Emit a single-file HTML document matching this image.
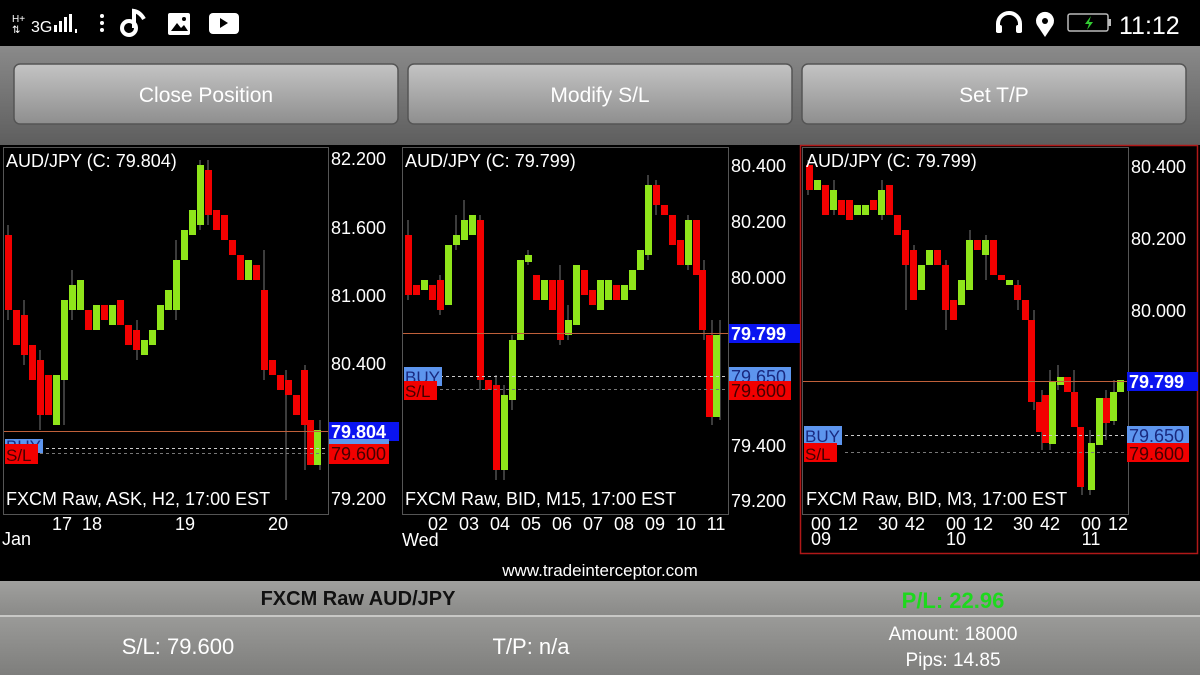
<!DOCTYPE html>
<html><head><meta charset="utf-8"><style>
html,body{margin:0;padding:0;background:#000;width:1200px;height:675px;overflow:hidden}
svg{display:block;font-family:"Liberation Sans",sans-serif}
.r{fill:#f20000}.g{fill:#8fe51a}
.lbl{fill:#fff;font-size:18px}
.ax{fill:#fff;font-size:18px}
</style></head><body>
<svg width="1200" height="675" viewBox="0 0 1200 675" xmlns="http://www.w3.org/2000/svg">
<defs>
<linearGradient id="top" x1="0" y1="0" x2="0" y2="1"><stop offset="0" stop-color="#8a8a8a"/><stop offset="1" stop-color="#5e5e5e"/></linearGradient>
<linearGradient id="btn" x1="0" y1="0" x2="0" y2="1"><stop offset="0" stop-color="#c4c4c4"/><stop offset="1" stop-color="#8e8e8e"/></linearGradient>
<linearGradient id="bar1" x1="0" y1="0" x2="0" y2="1"><stop offset="0" stop-color="#a0a09e"/><stop offset="1" stop-color="#8a8a88"/></linearGradient>
<linearGradient id="bar2" x1="0" y1="0" x2="0" y2="1"><stop offset="0" stop-color="#9a9a98"/><stop offset="1" stop-color="#7e7e7c"/></linearGradient>
</defs>
<rect width="1200" height="675" fill="#000"/>
<!-- status bar -->
<g fill="#fff">
<text x="12" y="22" font-size="10">H+</text>
<text x="12" y="33" font-size="10">⇅</text>
<text x="31" y="32" font-size="16">3G</text>
<rect x="54" y="25" width="3" height="7"/><rect x="59" y="21" width="3" height="11"/><rect x="64" y="17" width="3" height="15"/><rect x="69" y="14" width="3" height="18"/><rect x="75" y="29" width="2" height="4"/>
<circle cx="102" cy="16" r="2"/><circle cx="102" cy="23" r="2"/><circle cx="102" cy="30" r="2"/>
<circle cx="129" cy="28" r="7" fill="none" stroke="#fff" stroke-width="4"/><path d="M134 28V11q6 1 10 8" fill="none" stroke="#fff" stroke-width="4"/>
<rect x="168" y="13" width="22" height="22" rx="2"/><path d="M171 31l6-8 4 5 3-3 4 6z" fill="#000"/><circle cx="184" cy="19" r="2" fill="#000"/>
<rect x="209" y="13" width="30" height="21" rx="4"/><path d="M220 18l8 5-8 5z" fill="#000"/>
<path d="M998 32v-8a11 11 0 0 1 22 0v8" fill="none" stroke="#fff" stroke-width="4"/><rect x="996" y="25" width="6" height="8" rx="2"/><rect x="1016" y="25" width="6" height="8" rx="2"/>
<path d="M1045 37l-8-12a9 9 0 1 1 16 0z"/><circle cx="1045" cy="21" r="3" fill="#000"/>
<rect x="1068" y="14" width="40" height="17" rx="2" fill="none" stroke="#bbb" stroke-width="1.5"/><rect x="1108" y="19" width="3" height="7" fill="#bbb"/><path d="M1091 16l-6 8h4l-2 6 6-8h-4z" fill="#3c3"/>
<text x="1119" y="34" font-size="25">11:12</text>
</g>
<!-- top buttons area -->
<rect x="0" y="46" width="1200" height="99" fill="url(#top)"/>
<g>
<rect x="14" y="64" width="384" height="60" rx="6" fill="url(#btn)" stroke="#555" stroke-width="1.5"/>
<rect x="408" y="64" width="384" height="60" rx="6" fill="url(#btn)" stroke="#555" stroke-width="1.5"/>
<rect x="802" y="64" width="384" height="60" rx="6" fill="url(#btn)" stroke="#555" stroke-width="1.5"/>
<g fill="#fff" font-size="21" text-anchor="middle">
<text x="206" y="102">Close Position</text><text x="600" y="102">Modify S/L</text><text x="994" y="102">Set T/P</text>
</g></g>
<!-- chart frames -->
<rect x="3.5" y="147.5" width="325" height="367" fill="none" stroke="#555"/>
<rect x="402.5" y="147.5" width="326" height="367" fill="none" stroke="#555"/>
<rect x="802.5" y="147.5" width="326" height="367" fill="none" stroke="#555"/>
<rect x="800.5" y="145.5" width="397" height="408" fill="none" stroke="#b01818" stroke-width="1.5"/>
<!-- wicks -->
<g stroke="#777" stroke-width="1">
<path d="M8 225V320M24 300V365M40 350V430M64 370V425M72 270V320M137 320V360M176 240V320M200 160V230M208 160V225M264 250V380M286 370V500M305 365V470M320 420V470"/>
<path d="M408 220V300M440 275V315M456 215V250M464 200V240M480 215V390M496 375V480M504 385V480M512 335V410M528 250V265M560 265V345M568 305V340M648 175V260M656 180V215M688 215V270M704 260V340M712 320V425M720 320V420"/>
<path d="M808 160V195M834 180V215M882 180V220M906 240V310M914 245V300M946 260V330M970 230V260M986 235V280M1018 280V310M1034 310V410M1042 390V450M1050 370V450M1058 365V390M1074 370V400M1082 430V495M1090 430V495M1106 390V440M1114 380V425"/>
</g>
<!-- chart1 candles -->
<g>
<rect class="r" x="5" y="235" width="7" height="75"/><rect class="r" x="13" y="310" width="7" height="35"/><rect class="r" x="21" y="315" width="7" height="40"/><rect class="r" x="29" y="345" width="7" height="35"/><rect class="r" x="37" y="360" width="7" height="55"/><rect class="r" x="45" y="375" width="7" height="40"/><rect class="g" x="53" y="375" width="7" height="50"/><rect class="g" x="61" y="300" width="7" height="80"/><rect class="g" x="69" y="285" width="7" height="25"/><rect class="g" x="77" y="280" width="7" height="30"/><rect class="r" x="85" y="310" width="7" height="20"/><rect class="g" x="93" y="305" width="7" height="25"/><rect class="r" x="101" y="305" width="7" height="15"/><rect class="g" x="109" y="305" width="7" height="20"/><rect class="r" x="117" y="300" width="7" height="25"/><rect class="r" x="125" y="325" width="7" height="20"/><rect class="r" x="133" y="330" width="7" height="20"/><rect class="g" x="141" y="340" width="7" height="15"/><rect class="g" x="149" y="330" width="7" height="15"/><rect class="g" x="157" y="305" width="7" height="25"/><rect class="g" x="165" y="290" width="7" height="20"/><rect class="g" x="173" y="260" width="7" height="50"/><rect class="g" x="181" y="230" width="7" height="30"/><rect class="g" x="189" y="210" width="7" height="25"/><rect class="g" x="197" y="165" width="7" height="60"/><rect class="r" x="205" y="170" width="7" height="45"/><rect class="r" x="213" y="210" width="7" height="20"/><rect class="r" x="221" y="215" width="7" height="25"/><rect class="r" x="229" y="240" width="7" height="15"/><rect class="r" x="237" y="255" width="7" height="25"/><rect class="g" x="245" y="260" width="7" height="20"/><rect class="r" x="253" y="265" width="7" height="15"/><rect class="r" x="261" y="290" width="7" height="80"/><rect class="r" x="269" y="360" width="7" height="15"/><rect class="r" x="277" y="375" width="7" height="15"/><rect class="r" x="285" y="380" width="7" height="15"/><rect class="r" x="293" y="395" width="7" height="20"/><rect class="r" x="301" y="370" width="7" height="55"/><rect class="r" x="307" y="420" width="7" height="45"/><rect class="g" x="314" y="430" width="7" height="35"/>
</g>
<!-- chart2 candles -->
<g>
<rect class="r" x="405" y="235" width="7" height="60"/><rect class="r" x="413" y="285" width="7" height="10"/><rect class="g" x="421" y="280" width="7" height="10"/><rect class="r" x="429" y="285" width="7" height="15"/><rect class="r" x="437" y="280" width="7" height="30"/><rect class="g" x="445" y="245" width="7" height="60"/><rect class="g" x="453" y="235" width="7" height="10"/><rect class="g" x="461" y="220" width="7" height="20"/><rect class="g" x="469" y="215" width="7" height="20"/><rect class="r" x="477" y="220" width="7" height="160"/><rect class="r" x="485" y="380" width="7" height="10"/><rect class="r" x="493" y="385" width="7" height="85"/><rect class="g" x="501" y="395" width="7" height="75"/><rect class="g" x="509" y="340" width="7" height="60"/><rect class="g" x="517" y="260" width="7" height="80"/><rect class="g" x="525" y="255" width="7" height="7"/><rect class="r" x="533" y="275" width="7" height="25"/><rect class="g" x="541" y="280" width="7" height="20"/><rect class="r" x="549" y="280" width="7" height="30"/><rect class="r" x="557" y="280" width="7" height="60"/><rect class="g" x="565" y="320" width="7" height="15"/><rect class="g" x="573" y="265" width="7" height="60"/><rect class="r" x="581" y="270" width="7" height="25"/><rect class="r" x="589" y="290" width="7" height="15"/><rect class="g" x="597" y="280" width="7" height="30"/><rect class="g" x="605" y="280" width="7" height="20"/><rect class="r" x="613" y="285" width="7" height="15"/><rect class="g" x="621" y="285" width="7" height="15"/><rect class="g" x="629" y="270" width="7" height="20"/><rect class="g" x="637" y="250" width="7" height="20"/><rect class="g" x="645" y="185" width="7" height="70"/><rect class="r" x="653" y="185" width="7" height="20"/><rect class="r" x="661" y="205" width="7" height="10"/><rect class="r" x="669" y="215" width="7" height="30"/><rect class="r" x="677" y="240" width="7" height="25"/><rect class="g" x="685" y="220" width="7" height="45"/><rect class="r" x="693" y="220" width="7" height="55"/><rect class="r" x="699" y="270" width="7" height="60"/><rect class="r" x="706" y="335" width="7" height="82"/><rect class="g" x="713" y="335" width="7" height="82"/>
</g>
<!-- chart3 candles -->
<g>
<rect class="r" x="806" y="165" width="7" height="25"/><rect class="g" x="814" y="180" width="7" height="10"/><rect class="r" x="822" y="185" width="7" height="30"/><rect class="g" x="830" y="190" width="7" height="20"/><rect class="r" x="838" y="200" width="7" height="15"/><rect class="r" x="846" y="200" width="7" height="20"/><rect class="g" x="854" y="205" width="7" height="10"/><rect class="g" x="862" y="205" width="7" height="10"/><rect class="r" x="870" y="200" width="7" height="10"/><rect class="g" x="878" y="190" width="7" height="25"/><rect class="r" x="886" y="185" width="7" height="30"/><rect class="r" x="894" y="215" width="7" height="20"/><rect class="r" x="902" y="230" width="7" height="35"/><rect class="r" x="910" y="250" width="7" height="50"/><rect class="g" x="918" y="265" width="7" height="25"/><rect class="g" x="926" y="250" width="7" height="15"/><rect class="r" x="934" y="250" width="7" height="15"/><rect class="r" x="942" y="265" width="7" height="45"/><rect class="r" x="950" y="300" width="7" height="20"/><rect class="g" x="958" y="280" width="7" height="25"/><rect class="g" x="966" y="240" width="7" height="50"/><rect class="r" x="974" y="240" width="7" height="10"/><rect class="g" x="982" y="240" width="7" height="15"/><rect class="r" x="990" y="240" width="7" height="35"/><rect class="r" x="998" y="275" width="7" height="5"/><rect class="g" x="1006" y="280" width="7" height="5"/><rect class="r" x="1014" y="285" width="7" height="15"/><rect class="r" x="1022" y="300" width="7" height="20"/><rect class="r" x="1028" y="320" width="7" height="82"/><rect class="r" x="1036" y="402" width="7" height="30"/><rect class="r" x="1042" y="395" width="7" height="48"/><rect class="g" x="1049" y="382" width="7" height="62"/><rect class="g" x="1057" y="377" width="7" height="8"/><rect class="r" x="1064" y="377" width="7" height="15"/><rect class="r" x="1071" y="392" width="7" height="35"/><rect class="r" x="1077" y="427" width="7" height="60"/><rect class="g" x="1088" y="443" width="7" height="47"/><rect class="g" x="1096" y="398" width="7" height="47"/><rect class="r" x="1103" y="398" width="7" height="25"/><rect class="g" x="1110" y="392" width="7" height="29"/><rect class="g" x="1117" y="380" width="7" height="12"/>
</g>
<!-- horizontal lines -->
<g stroke-width="1">
<line x1="4" y1="431.5" x2="328" y2="431.5" stroke="#c0603a"/>
<line x1="403" y1="333.5" x2="728" y2="333.5" stroke="#c0603a"/>
<line x1="803" y1="381.5" x2="1128" y2="381.5" stroke="#c0603a"/>
<g stroke="#ccc" stroke-dasharray="3,3">
<line x1="40" y1="448.5" x2="328" y2="448.5"/><line x1="40" y1="453.5" x2="328" y2="453.5" stroke="#777"/>
<line x1="440" y1="376.5" x2="728" y2="376.5"/><line x1="440" y1="389.5" x2="728" y2="389.5" stroke="#777"/>
<line x1="845" y1="435.5" x2="1128" y2="435.5"/><line x1="845" y1="452.5" x2="1128" y2="452.5" stroke="#777"/>
</g></g>
<!-- BUY/SL left labels -->
<g font-size="17">
<rect x="5" y="439" width="38" height="14" fill="#5d95ee"/><text x="6" y="452" fill="#1a2a80">BUY</text>
<rect x="5" y="444" width="33" height="20" fill="#f20000"/><text x="6" y="461" fill="#400">S/L</text>
<rect x="404" y="367" width="38" height="19" fill="#5d95ee"/><text x="405" y="383" fill="#1a2a80">BUY</text>
<rect x="404" y="381" width="33" height="19" fill="#f20000"/><text x="405" y="397" fill="#400">S/L</text>
<rect x="804" y="426" width="38" height="19" fill="#5d95ee"/><text x="805" y="442" fill="#1a2a80">BUY</text>
<rect x="804" y="443" width="33" height="19" fill="#f20000"/><text x="805" y="460" fill="#400">S/L</text>
</g>
<!-- price axes -->
<g class="lbl" font-size="18">
<text x="331" y="165">82.200</text><text x="331" y="234">81.600</text><text x="331" y="302">81.000</text><text x="331" y="370">80.400</text><text x="331" y="505">79.200</text>
<text x="731" y="172">80.400</text><text x="731" y="228">80.200</text><text x="731" y="284">80.000</text><text x="731" y="452">79.400</text><text x="731" y="507">79.200</text>
<text x="1131" y="173">80.400</text><text x="1131" y="245">80.200</text><text x="1131" y="317">80.000</text>
</g>
<g font-size="18">
<rect x="329" y="422" width="70" height="19" fill="#0a14f0"/><text x="331" y="438" fill="#fff" font-weight="bold">79.804</text>
<rect x="329" y="439" width="60" height="8" fill="#5d95ee"/>
<rect x="329" y="444" width="60" height="20" fill="#f20000"/><text x="331" y="460" fill="#400">79.600</text>
<rect x="729" y="324" width="71" height="19" fill="#0a14f0"/><text x="731" y="340" fill="#fff" font-weight="bold">79.799</text>
<rect x="729" y="367" width="62" height="19" fill="#5d95ee"/><text x="731" y="383" fill="#1a2a80">79.650</text>
<rect x="729" y="381" width="62" height="19" fill="#f20000"/><text x="731" y="397" fill="#400">79.600</text>
<rect x="1127" y="372" width="71" height="19" fill="#0a14f0"/><text x="1129" y="388" fill="#fff" font-weight="bold">79.799</text>
<rect x="1127" y="426" width="62" height="19" fill="#5d95ee"/><text x="1129" y="442" fill="#1a2a80">79.650</text>
<rect x="1127" y="443" width="62" height="19" fill="#f20000"/><text x="1129" y="460" fill="#400">79.600</text>
</g>
<!-- titles -->
<g class="lbl" font-size="17">
<text x="6" y="167">AUD/JPY (C: 79.804)</text><text x="405" y="167">AUD/JPY (C: 79.799)</text><text x="806" y="167">AUD/JPY (C: 79.799)</text>
<text x="6" y="505">FXCM Raw, ASK, H2, 17:00 EST</text><text x="405" y="505">FXCM Raw, BID, M15, 17:00 EST</text><text x="806" y="505">FXCM Raw, BID, M3, 17:00 EST</text>
</g>
<!-- x axes -->
<g class="ax" font-size="18" text-anchor="middle">
<text x="62" y="530">17</text><text x="92" y="530">18</text><text x="185" y="530">19</text><text x="278" y="530">20</text>
<text x="438" y="530">02</text><text x="469" y="530">03</text><text x="500" y="530">04</text><text x="531" y="530">05</text><text x="562" y="530">06</text><text x="593" y="530">07</text><text x="624" y="530">08</text><text x="655" y="530">09</text><text x="686" y="530">10</text><text x="716" y="530">11</text>
<text x="821" y="530">00</text><text x="848" y="530">12</text><text x="888" y="530">30</text><text x="915" y="530">42</text><text x="956" y="530">00</text><text x="983" y="530">12</text><text x="1023" y="530">30</text><text x="1050" y="530">42</text><text x="1091" y="530">00</text><text x="1118" y="530">12</text>
<text x="821" y="545">09</text><text x="956" y="545">10</text><text x="1091" y="545">11</text>
</g>
<g class="ax" font-size="18"><text x="2" y="545">Jan</text><text x="402" y="546">Wed</text></g>
<text x="600" y="576" fill="#fff" font-size="17" text-anchor="middle">www.tradeinterceptor.com</text>
<!-- bottom bars -->
<rect x="0" y="581" width="1200" height="34" fill="url(#bar1)"/>
<rect x="0" y="615" width="1200" height="2" fill="#c8c8c6"/>
<rect x="0" y="617" width="1200" height="58" fill="url(#bar2)"/>
<text x="358" y="605" font-size="20" font-weight="bold" fill="#111" text-anchor="middle">FXCM Raw AUD/JPY</text>
<text x="953" y="608" font-size="22" font-weight="bold" fill="#1ed81e" text-anchor="middle">P/L: 22.96</text>
<text x="178" y="654" font-size="22" fill="#fff" text-anchor="middle">S/L: 79.600</text>
<text x="531" y="654" font-size="22" fill="#fff" text-anchor="middle">T/P: n/a</text>
<text x="953" y="640" font-size="19" fill="#fff" text-anchor="middle">Amount: 18000</text>
<text x="953" y="666" font-size="19" fill="#fff" text-anchor="middle">Pips: 14.85</text>
</svg>
</body></html>
